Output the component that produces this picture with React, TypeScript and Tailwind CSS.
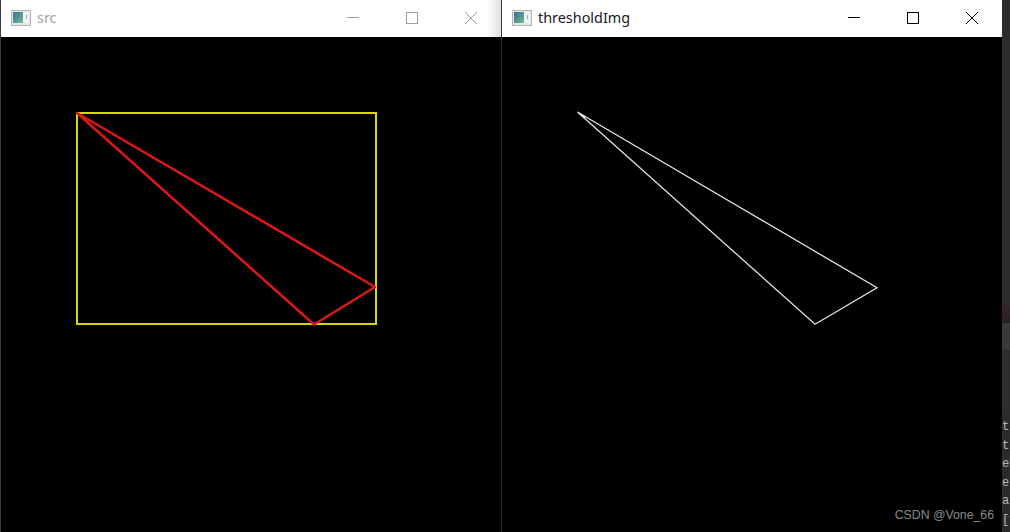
const lineColor = "#d81818";

function WinIcon() {
  return (
    <svg width="20" height="16" viewBox="0 0 20 16" className="shrink-0">
      <defs>
        <linearGradient id="pane" x1="0" y1="0" x2="1" y2="1">
          <stop offset="0" stopColor="#2f6f9a" />
          <stop offset="1" stopColor="#78bb8c" />
        </linearGradient>
      </defs>
      <rect x="0.5" y="0.5" width="19" height="15" fill="#e6e8ea" stroke="#b0b5ba" />
      <rect x="2" y="2" width="10" height="11" fill="url(#pane)" />
      <rect x="12" y="2" width="6" height="11" fill="#f0f2f0" />
      <rect x="15" y="5" width="1" height="4" fill="#9ab4b8" />
    </svg>
  );
}

function TitleBar({ title, active }: { title: string; active: boolean }) {
  const stroke = active ? "#000000" : "#a0a0a0";
  return (
    <div className="h-[37px] shrink-0 bg-white flex items-center pl-[10px] pr-px pb-px relative">
      <WinIcon />
      <span
        className={`ml-[6px] text-[14.4px] font-['Noto_Sans',sans-serif] ${active ? "text-[#1a1a1a]" : "text-[#a3a3a3]"}`}
      >
        {title}
      </span>
      <div className="ml-auto flex items-center">
        <button className="w-[59px] h-[36px] flex items-center justify-center">
          <svg width="12" height="12" viewBox="0 0 12 12">
            <path d="M0 5.5H12" stroke={stroke} strokeWidth="1" />
          </svg>
        </button>
        <button className="w-[59px] h-[36px] flex items-center justify-center">
          <svg width="12" height="12" viewBox="0 0 12 12">
            <rect x="0.5" y="0.5" width="11" height="11" fill="none" stroke={stroke} />
          </svg>
        </button>
        <button className="w-[59px] h-[36px] flex items-center justify-center">
          <svg width="12" height="12" viewBox="0 0 12 12">
            <path d="M0 0L12 12M12 0L0 12" stroke={stroke} strokeWidth="1" />
          </svg>
        </button>
      </div>
      {/* shadow from the window on top */}
      {!active && (
        <div className="absolute right-0 top-0 h-full w-[14px] bg-gradient-to-r from-transparent to-[#dedede]" />
      )}
    </div>
  );
}

const consoleRows = ["ti", "ti", "eM", "e[", "ai", "[y"];

export default function App() {
  return (
    <div className="w-[1010px] h-[532px] flex overflow-hidden bg-black">
      {/* src window */}
      <div className="w-[501px] shrink-0 flex flex-col border-l border-[#3a3a3a]">
        <TitleBar title="src" active={false} />
        <div className="flex-1 bg-black">
          <svg width="500" height="495" viewBox="0 0 500 495" className="block">
            <rect x="76" y="76" width="299" height="211" fill="none" stroke="#d8d800" strokeWidth="2" />
            <path
              d="M76 76L374 250L313 287.5Z"
              fill="none"
              stroke={lineColor}
              strokeWidth="2.6"
              strokeLinejoin="round"
            />
          </svg>
        </div>
      </div>
      <div className="w-px shrink-0 flex flex-col">
        <div className="h-[37px] bg-[#3a3a3a]" />
        <div className="flex-1 bg-[#2a2a2a]" />
      </div>
      {/* thresholdImg window */}
      <div className="w-[500px] shrink-0 flex flex-col relative">
        <TitleBar title="thresholdImg" active />
        <div className="flex-1 bg-black">
          <svg width="500" height="495" viewBox="0 0 500 495" className="block">
            <path d="M75.5 75L375 250.7L313 287.3Z" fill="none" stroke="#e2e2e2" strokeWidth="1.3" />
            <path d="M75.5 75L84 80L82 81.5Z" fill="#f0f0f0" />
          </svg>
        </div>
        <span className="absolute right-[8px] bottom-[9px] text-[12.3px] leading-[15px] text-[#8a8a8a] font-['Liberation_Sans',sans-serif]">
          CSDN @Vone_66
        </span>
      </div>
      {/* console behind the windows */}
      <div className="flex-1 min-w-0 flex flex-col">
        <div className="h-[300px] bg-[#302a30]" />
        <div className="h-[23px] bg-gradient-to-b from-[#302a30] to-[#2c1c20]" />
        <div className="h-[27px] bg-[#3a3a3c]" />
        <div className="h-[65px] bg-[#2e2e30]" />
        <div className="flex-1 bg-[#2b2b2b] pt-[3px] font-['Liberation_Mono',monospace] text-[12px] leading-[18.5px] text-[#b8b8b8] overflow-hidden whitespace-nowrap">
          {consoleRows.map((row, i) => (
            <div key={i}>{row}</div>
          ))}
        </div>
      </div>
    </div>
  );
}
